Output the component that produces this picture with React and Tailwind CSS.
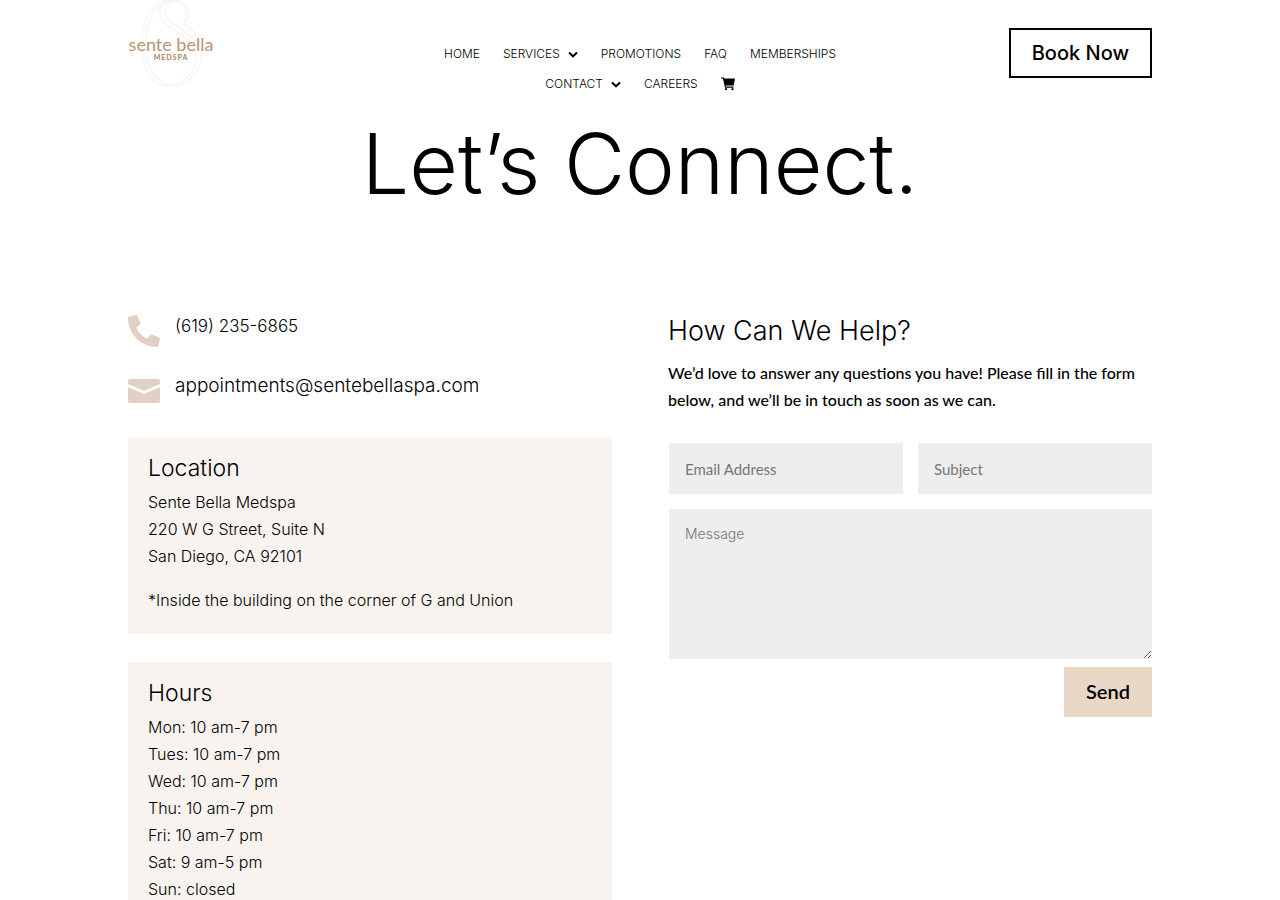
import React from 'react'
import { FaPhoneAlt } from 'react-icons/fa'

const NAV_ITEMS = [
    { label: 'HOME' },
    { label: 'SERVICES', hasMenu: true },
    { label: 'PROMOTIONS' },
    { label: 'FAQ' },
    { label: 'MEMBERSHIPS' },
    { label: 'CONTACT', hasMenu: true },
    { label: 'CAREERS' },
]

const HOURS = [
    'Mon: 10 am-7 pm',
    'Tues: 10 am-7 pm',
    'Wed: 10 am-7 pm',
    'Thu: 10 am-7 pm',
    'Fri: 10 am-7 pm',
    'Sat: 9 am-5 pm',
    'Sun: closed',
]

const Logo = () => (
    <svg viewBox="0 0 86 86" className="h-[86px] w-[86px]" role="img" aria-label="Sente Bella Medspa">
        <g fill="none" stroke="#f8f6f2" strokeWidth="1.5">
            <path d="M55 24 C65 16 62 1 46 0 C26 -1 14 18 14 44 C14 68 24 86 42 86 C61 86 73 72 73 53 C73 40 67 30 55 24" />
            <path d="M55 24 C63 12 57 3 46 1 C34 0 29 9 33 18 C38 29 61 35 67 50 C71 66 60 82 44 85" />
            <path d="M41 1 C24 8 18 24 18 44 C18 64 25 79 40 85" />
            <path d="M46 1 C38 3 35 9 38 16 C44 27 66 32 70 50" />
        </g>
        <text x="43" y="51" textAnchor="middle" fontSize="18" fill="#bb9375" className="font-[Lato] font-normal">
            sente bella
        </text>
        <text x="43" y="60" textAnchor="middle" fontSize="7" letterSpacing="1" fill="#a9805f" className="font-[Lato] font-bold">
            MEDSPA
        </text>
    </svg>
)

const Chevron = () => (
    <svg viewBox="0 0 10 8" className="h-2 w-[10px]" fill="none" stroke="#000" strokeWidth="2" aria-hidden="true">
        <path d="M1 2.500 L5 6.300 L9 2.500" />
    </svg>
)

const CartIcon = () => (
    <svg viewBox="0 0 14 14" className="size-[14px]" aria-hidden="true">
        <path d="M0 1 H2.500 L4.500 10.200 H12.500" fill="none" stroke="#000" strokeWidth="1.200" />
        <path d="M2.600 1.500 H14 L12.600 8.500 H4.200 Z" />
        <circle cx="5" cy="12.200" r="1.100" />
        <circle cx="11.500" cy="12.200" r="1.100" />
    </svg>
)

const MailIcon = () => (
    <svg viewBox="0 0 32 24" className="h-6 w-8" fill="#e2d0c6" aria-hidden="true">
        <path d="M0 5 V2 A2 2 0 0 1 2 0 H30 A2 2 0 0 1 32 2 V5 L16 12 Z" />
        <path d="M0 8 L16 15 L32 8 V22 A2 2 0 0 1 30 24 H2 A2 2 0 0 1 0 22 Z" />
    </svg>
)

const Header = () => (
    <header className="mx-auto flex w-4/5 items-start justify-between">
        <a href="#home" className="flex-1">
            <Logo />
        </a>

        <nav className="flex w-[420px] flex-wrap justify-center gap-x-[23px] pt-[39px] text-[12px] leading-[30px] font-light">
            {NAV_ITEMS.map((item) => (
                <a key={item.label} href={`#${item.label.toLowerCase()}`} className="flex items-center gap-2">
                    {item.label}
                    {item.hasMenu && <Chevron />}
                </a>
            ))}
            <a href="#cart" aria-label="Cart" className="flex items-center">
                <CartIcon />
            </a>
        </nav>

        <div className="flex flex-1 justify-end pt-7">
            <button className="h-[50px] border-2 border-black px-[21px] text-[20px] font-medium">Book Now</button>
        </div>
    </header>
)

const InfoCard = ({ title, children }) => (
    <section className="mb-7 bg-[#f8f3ef] p-5 text-[16px] leading-[27px]">
        <h2 className="mb-[10px] text-[23px] leading-[22px]">{title}</h2>
        {children}
    </section>
)

const ContactForm = () => (
    <form className="pl-px" onSubmit={(e) => e.preventDefault()}>
        <div className="grid grid-cols-2 gap-[15px] font-[Lato] text-[15px] font-normal">
            <input
                type="email"
                aria-label="Email Address"
                placeholder="Email Address"
                className="h-[51px] min-w-0 bg-[#eee] px-4 placeholder:text-[#757575]"
            />
            <input
                type="text"
                aria-label="Subject"
                placeholder="Subject"
                className="h-[51px] min-w-0 bg-[#eee] px-4 placeholder:text-[#757575]"
            />
        </div>
        <textarea
            aria-label="Message"
            placeholder="Message"
            className="mt-[15px] block h-[150px] w-full bg-[#eee] p-4 text-[14px] leading-[18px] font-light placeholder:text-[#757575]"
        />
        <div className="mt-2 flex justify-end">
            <button type="submit" className="h-[50px] bg-[#e9d8c6] px-[22px] pb-[2px] font-[Lato] text-[20px] font-semibold">
                Send
            </button>
        </div>
    </form>
)

const App = () => {
    return (
        <div className="min-h-screen bg-white font-[Inter,sans-serif] font-light text-black">
            <Header />

            <main>
                <h1 className="mt-[25px] text-center text-[84px] leading-[80px] font-light">Let’s Connect.</h1>

                <div className="mx-auto mt-[111px] grid w-4/5 grid-cols-2 gap-14">
                    <div>
                        <a href="tel:6192356865" className="flex h-[60px] gap-[15px] text-[17px] leading-[22px]">
                            <FaPhoneAlt className="size-8 text-[#e2d0c6]" />
                            (619) 235-6865
                        </a>
                        <a
                            href="mailto:appointments@sentebellaspa.com"
                            className="flex h-[62px] gap-[15px] text-[19px] leading-[22px]"
                        >
                            <span className="pt-1">
                                <MailIcon />
                            </span>
                            appointments@sentebellaspa.com
                        </a>

                        <InfoCard title="Location">
                            <p>Sente Bella Medspa</p>
                            <p>220 W G Street, Suite N</p>
                            <p>San Diego, CA 92101</p>
                            <p className="mt-[17px]">*Inside the building on the corner of G and Union</p>
                        </InfoCard>

                        <InfoCard title="Hours">
                            {HOURS.map((line) => (
                                <p key={line}>{line}</p>
                            ))}
                        </InfoCard>
                    </div>

                    <div>
                        <h2 className="text-[27px] leading-[31px]">How Can We Help?</h2>
                        <p className="mt-[13px] mb-[30px] font-[Lato] text-[16px] leading-[27px] font-medium">
                            We’d love to answer any questions you have! Please fill in the form below, and we’ll be in
                            touch as soon as we can.
                        </p>
                        <ContactForm />
                    </div>
                </div>
            </main>
        </div>
    )
}

export default App
